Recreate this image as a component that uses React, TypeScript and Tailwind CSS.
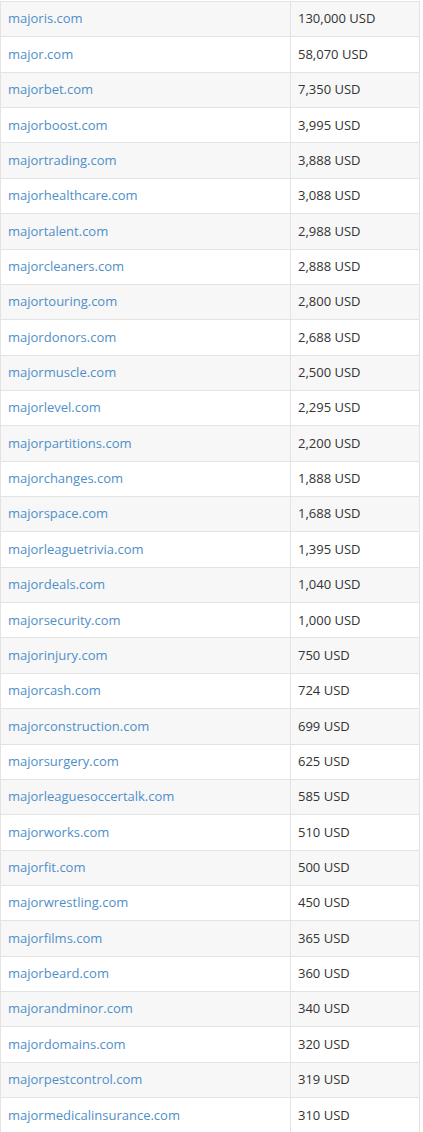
import React from 'react';

const domains: [string, string][] = [
  ['majoris.com', '130,000 USD'],
  ['major.com', '58,070 USD'],
  ['majorbet.com', '7,350 USD'],
  ['majorboost.com', '3,995 USD'],
  ['majortrading.com', '3,888 USD'],
  ['majorhealthcare.com', '3,088 USD'],
  ['majortalent.com', '2,988 USD'],
  ['majorcleaners.com', '2,888 USD'],
  ['majortouring.com', '2,800 USD'],
  ['majordonors.com', '2,688 USD'],
  ['majormuscle.com', '2,500 USD'],
  ['majorlevel.com', '2,295 USD'],
  ['majorpartitions.com', '2,200 USD'],
  ['majorchanges.com', '1,888 USD'],
  ['majorspace.com', '1,688 USD'],
  ['majorleaguetrivia.com', '1,395 USD'],
  ['majordeals.com', '1,040 USD'],
  ['majorsecurity.com', '1,000 USD'],
  ['majorinjury.com', '750 USD'],
  ['majorcash.com', '724 USD'],
  ['majorconstruction.com', '699 USD'],
  ['majorsurgery.com', '625 USD'],
  ['majorleaguesoccertalk.com', '585 USD'],
  ['majorworks.com', '510 USD'],
  ['majorfit.com', '500 USD'],
  ['majorwrestling.com', '450 USD'],
  ['majorfilms.com', '365 USD'],
  ['majorbeard.com', '360 USD'],
  ['majorandminor.com', '340 USD'],
  ['majordomains.com', '320 USD'],
  ['majorpestcontrol.com', '319 USD'],
  ['majormedicalinsurance.com', '310 USD'],
];

export default function App() {
  return (
    <div className="bg-white pt-px font-['Open_Sans',sans-serif] text-[13px]">
      <table className="w-[420px] table-fixed border-collapse">
        <colgroup>
          <col className="w-[290px]" />
          <col />
        </colgroup>
        <tbody>
          {domains.map(([name, price], i) => (
            <tr key={name} className={i % 2 === 0 ? 'bg-[#f7f7f7]' : 'bg-white'}>
              <td className="h-[35.36px] border border-[#e3e3e3] pl-[7px] pr-2 py-0 align-middle">
                <a href="#" className="text-[#4f8fc9]">{name}</a>
              </td>
              <td className="h-[35.36px] border border-[#e3e3e3] pl-[7px] pr-2 py-0 align-middle text-[#333]">
                {price}
              </td>
            </tr>
          ))}
        </tbody>
      </table>
    </div>
  );
}
